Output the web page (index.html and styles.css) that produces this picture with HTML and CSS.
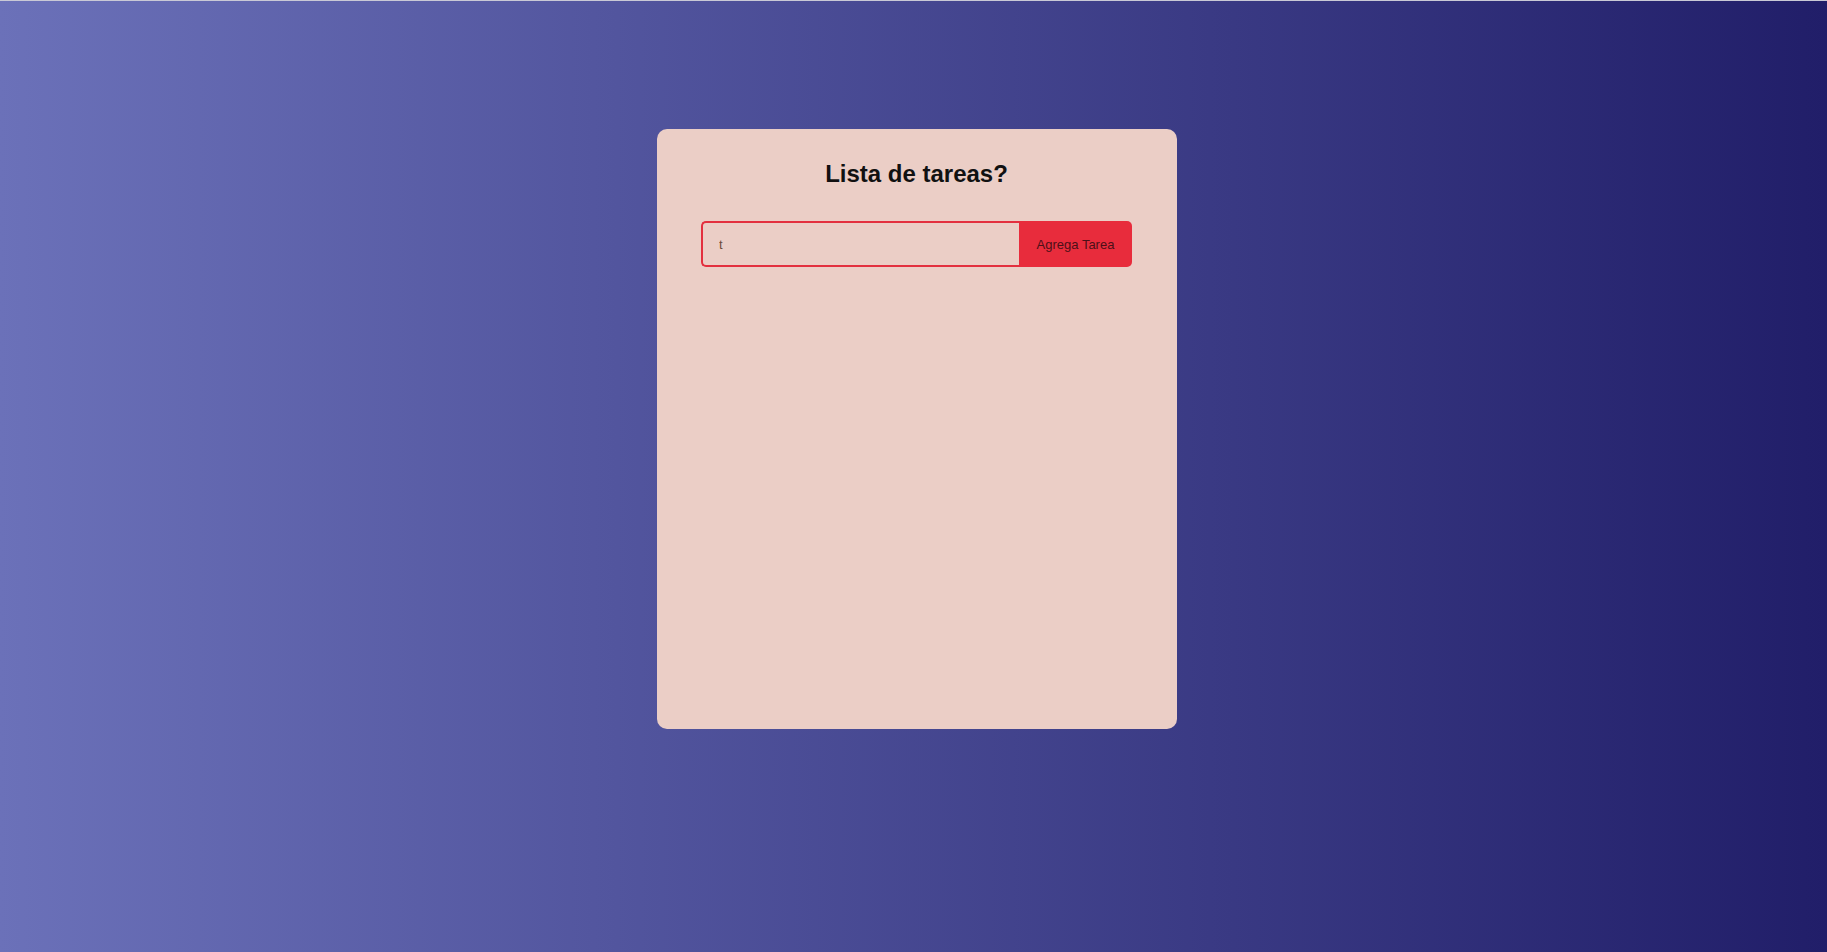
FILE: index.html
```html
<!DOCTYPE html>
<html lang="es">
<head>
<meta charset="utf-8">
<title>Lista de tareas</title>
<link rel="stylesheet" href="styles.css">
</head>
<body>
<main class="page">
  <section class="card">
    <h2 class="title">Lista de tareas?</h2>
    <form class="todo-form" onsubmit="return false">
      <input class="todo-input" type="text" value="t">
      <button class="todo-button" type="submit">Agrega Tarea</button>
    </form>
  </section>
</main>
</body>
</html>
```

FILE: styles.css
```css
* { box-sizing: border-box; }
html, body { margin: 0; height: 100%; }
body {
  font-family: "Liberation Sans", Arial, sans-serif;
  background: linear-gradient(to right, #6b71b9 0%, #211e69 100%);
  border-top: 1px solid #c9c9d6;
}
.page {
  display: flex;
  justify-content: center;
  padding-top: 128px;
  padding-left: 7px;
}
.card {
  width: 520px;
  height: 600px;
  background: #ebcec6;
  border-radius: 10px;
  padding: 31px 45px 31px 44px;
}
.title {
  margin: 0 0 33px;
  text-align: center;
  font-size: 24px;
  font-weight: bold;
  color: #111;
  line-height: 28px;
}
.todo-form {
  display: flex;
  height: 46px;
}
.todo-input {
  flex: 1;
  min-width: 0;
  background: transparent;
  border: 2px solid #e3303f;
  border-right: none;
  border-radius: 5px 0 0 5px;
  padding: 0 16px;
  font-family: "Liberation Sans", Arial, sans-serif;
  font-size: 13px;
  color: #6b4a3a;
  outline: none;
}
.todo-button {
  width: 113px;
  background: #e82c3c;
  border: none;
  border-radius: 0 5px 5px 0;
  font-family: "Liberation Sans", Arial, sans-serif;
  font-size: 13px;
  color: #4d1018;
  padding: 0;
}
```
